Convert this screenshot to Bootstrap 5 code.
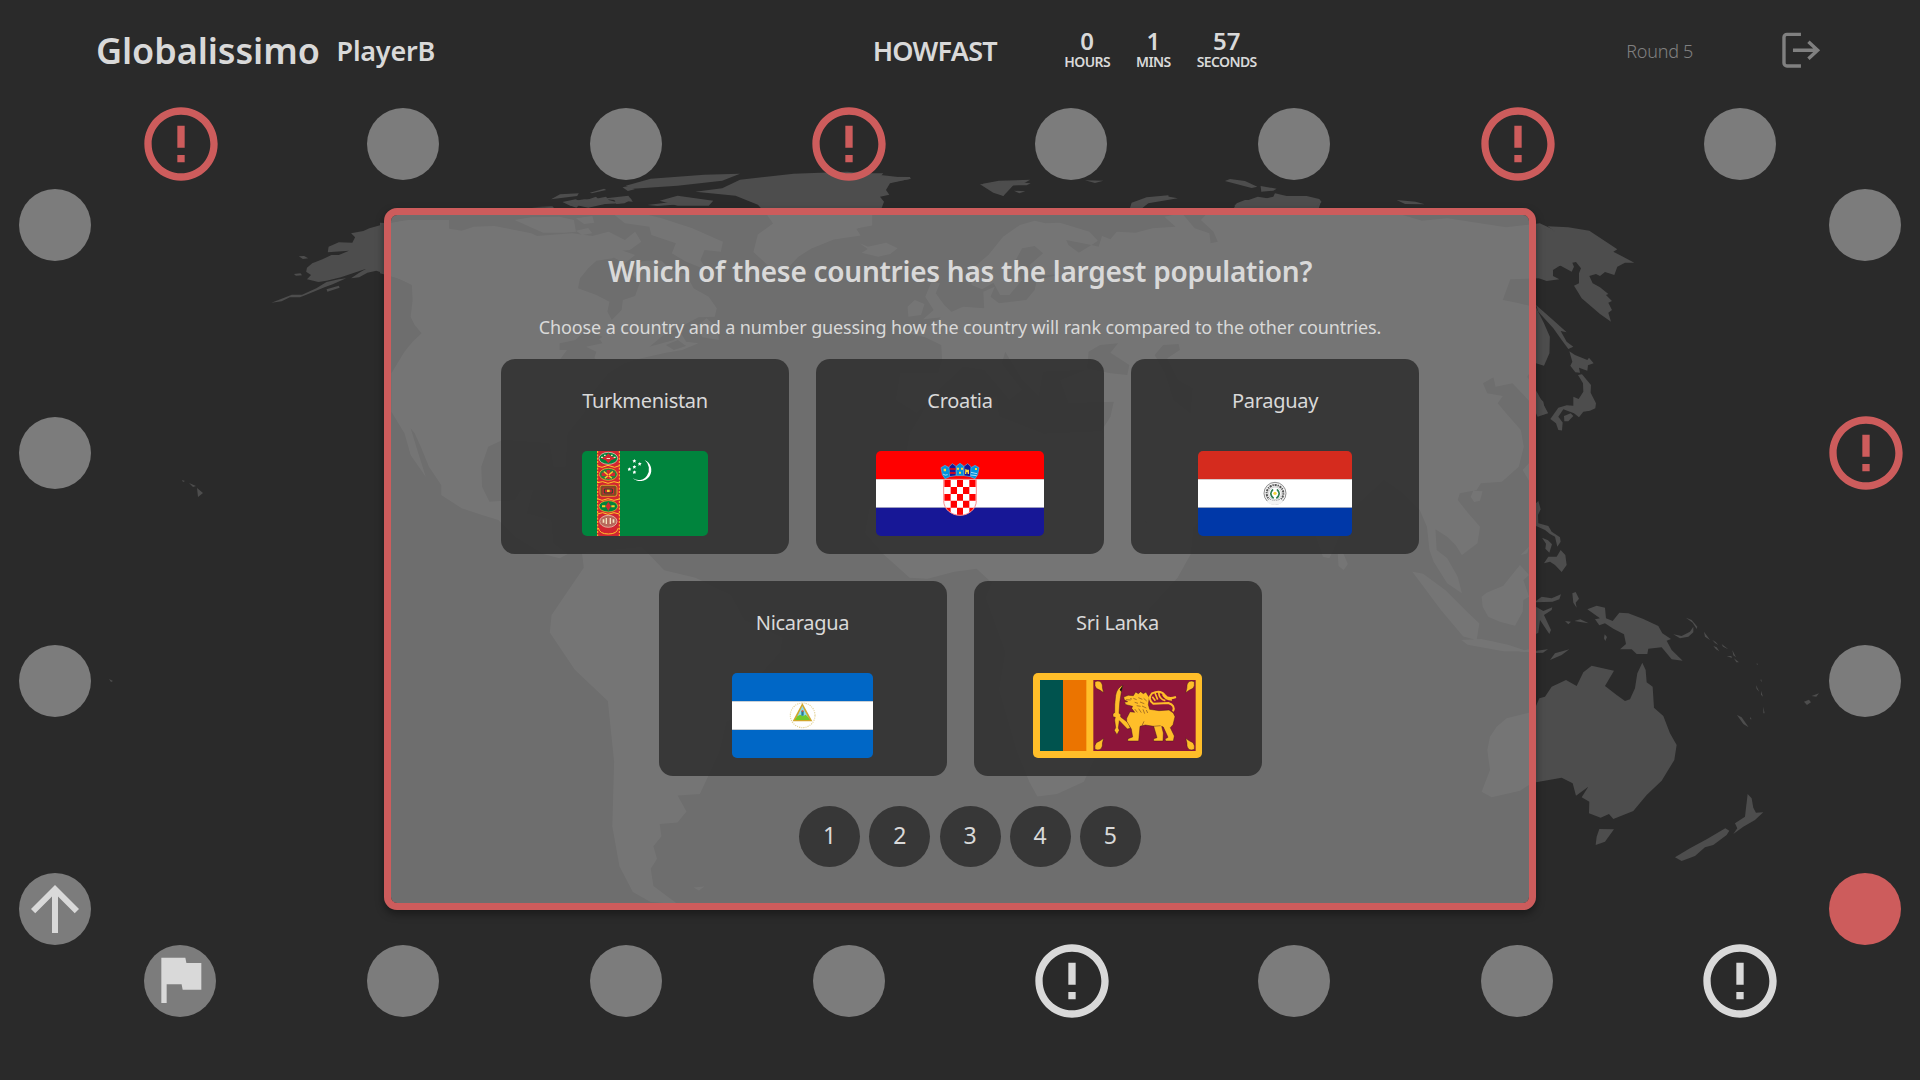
<!DOCTYPE html>
<html lang="en">
<head>
<meta charset="utf-8">
<title>Globalissimo</title>
<link href="https://cdn.jsdelivr.net/npm/bootstrap@5.3.0/dist/css/bootstrap.min.css" rel="stylesheet">
<style>
body{width:1920px;height:1080px;overflow:hidden;background:#2a2a2a;color:#d9d9d9;font-family:"Noto Sans",sans-serif}
.world{position:absolute;left:0;top:0;z-index:0;fill:#4d4d4d}
.world .sea{fill:#2a2a2a}
.screen{position:relative;z-index:1;height:1080px}
.topbar{height:108px;padding:0 96px;white-space:nowrap;font-weight:600}
.topbar>div{height:102px}
.brand-name{font-size:36px;width:241px;letter-spacing:-.1px}
.player-name,.game-name{font-size:27px}
.player-name{width:537px;letter-spacing:-.25px}
.game-name{width:192px;letter-spacing:-.75px}
.clock{width:563px;padding-bottom:6px;gap:26px}
.clock-num{font-size:24px;line-height:28px}
.clock-unit{font-size:14px;line-height:14px;letter-spacing:-.6px}
.round-no{font-size:18px;font-weight:300;color:#808080;width:148px;letter-spacing:-.27px}
.ring-row{height:72px;padding:0 68.6px}
.ring-mid{height:765px;padding:9px 19px 0}
.dot{width:72px;height:72px;border-radius:50%;background:#7c7c7c}
.dot.red{background:#cd5c5c}
.dot.open{background:none;color:#cd5c5c}
.dot.open.pale{color:#d9d9d9}
.dot svg{flex:none;fill:currentColor}
.dot.open svg{margin:0 0 1px 1px}
.flag-mark{margin-bottom:5px}
.panel{width:1152px;height:702px;margin-top:19px;border:7px solid #cd5c5c;border-radius:13px;background:rgba(127,127,127,.8);background-clip:padding-box;box-shadow:0 4px 8px rgba(0,0,0,.4);padding-top:36px}
.question{font-size:28px;line-height:40px;font-weight:600;margin-bottom:22px;letter-spacing:-.27px}
.hint{font-size:18px;line-height:28px;margin-bottom:18px;letter-spacing:-.13px}
.answers{width:1000px;gap:27px}
.answer{width:288px;height:195px;border-radius:14px;background:rgba(42,42,42,.81);font-size:20px;letter-spacing:-.3px;padding:27px 0 18px}
.answer svg{height:85px;border-radius:5px}
.ranks{gap:9.2px;margin:30px 0 0 20px}
.rank{width:61px;height:61px;border-radius:50%;background:#373737;font-size:23px;line-height:58px}
</style>
<script src="https://cdn.jsdelivr.net/npm/bootstrap@5.3.0/dist/js/bootstrap.bundle.min.js"></script>
</head>
<body>
<svg class="world" width="1920" height="1080" viewBox="0 0 1920 1080">
<!-- Alaska -->
<g transform="scale(.4082 .3333)">
<path d="M1000,660L960,668 942,672 905,685 890,693 860,700 870,712 863,728 830,727 805,740 803,757 820,755 855,752 830,765 812,765 790,778 765,790 752,803 750,815 762,825 752,838 780,846 800,842 835,832 897,806 880,818 860,835 880,832 900,818 922,812 945,822 985,840 1012,855 1100,860 1100,660ZM665,908L690,896 715,884 740,884 775,865 800,846 830,838 848,835 815,853 795,862 755,882 735,892 710,892 690,904ZM800,868L830,857 832,863 802,875ZM732,769L745,768 755,775 742,777ZM720,822L736,820 740,826 725,827ZM1350,598L1372,583 1418,580 1414,588ZM1378,606L1410,598 1425,605 1460,590 1466,598 1478,600 1475,612 1440,614 1398,618ZM1400,618l18,-2 -6,7ZM1445,578L1480,566 1485,570 1450,580ZM1525,562L1540,558 1555,568 1538,573ZM1505,600L1535,590 1548,598 1530,610 1510,612ZM1303,622l50,-3 5,6Z"/>
</g>
<!-- North America -->
<g transform="translate(380 200) scale(.4082 .3333)">
<path d="M0,68L28,70 60,62 100,66 130,78 200,92 230,80 280,78 330,90 370,100 385,108 470,100 520,108 560,95 600,120 625,95 640,125 612,150 592,152 570,175 530,182 510,205 490,235 485,265 530,285 562,305 557,335 568,360 592,330 595,300 625,288 636,250 620,225 625,190 650,182 690,182 712,210 750,222 768,265 805,290 825,325 820,350 780,352 740,378 700,400 660,440 720,420 735,395 750,425 780,430 740,450 700,458 640,475 600,490 560,520 520,580 500,640 460,700 455,800 425,800 415,730 300,720 265,740 248,800 250,860 268,905 330,900 345,870 375,870 360,940 420,960 425,1030 460,1062 440,1075 400,1062 330,1010 290,960 250,945 200,925 150,885 150,855 120,800 100,740 85,700 75,685 90,745 112,830 75,765 60,700 28,635 28,520 60,455 80,425 102,400 85,375 75,350 80,300 78,255 45,235 0,220ZM505,390L545,410 525,430 470,450 500,440 530,480 440,480 470,430Z" fill-rule="evenodd"/>
<path d="M330,60L370,52 440,50 475,60 480,95 450,98 400,98 375,85ZM480,55L520,48 525,68 500,72ZM575,45L640,40 690,55 765,85 840,125 835,155 795,150 785,180 800,210 750,185 715,160 725,130 665,105 660,80 600,70ZM480,92l30,-8 10,16 -25,5ZM560,165L590,150 625,165 600,190ZM775,380L800,355 828,385 830,420 790,412ZM450,8L500,-2 560,0 590,10 500,15ZM655,15L700,8 745,12 680,18ZM1175,130L1195,140 1215,135 1240,128 1268,145 1250,162 1220,170 1180,158 1195,147Z"/>
<path class="sea" d="M440,430L500,415 540,420 545,430 505,440 530,455 525,475 490,480 460,480 480,450 440,450ZM700,435l30,-15 20,18 -30,12Z"/>
</g>
<!-- Greenland, South America, Africa, Indonesia -->
<g transform="translate(240 140) scale(.8929 .4974)">
<path d="M510,104L540,97 560,80 620,68 680,64 725,72 752,78 720,88 715,105 718,125 708,145 708,172 690,178 695,192 665,200 640,218 625,235 615,255 605,268 590,250 575,225 580,190 597,168 590,150 580,130 555,112ZM432,92L460,78 520,70 560,68 540,82 490,92 440,98ZM370,128l40,-14 5,12 -25,10ZM405,118l30,-6 5,12ZM470,122L490,112 530,122 525,132 490,132Z"/>
<path d="M383,830L450,818 475,865 510,880 550,915 565,965 608,1000 605,1030 585,1070 578,1140 545,1170 537,1230 515,1315 490,1318 500,1350 490,1372 470,1375 472,1400 463,1420 467,1445 460,1465 463,1500 490,1536 460,1532 440,1512 425,1460 417,1380 419,1250 412,1128 375,1065 347,990 349,955 385,860ZM508,1503l12,-2 -6,8Z"/>
<path d="M720,832L700,790 705,740 745,640 750,590 770,530 848,515 850,555 900,590 965,585 985,660 1015,770 1030,790 1068,780 1065,832 1050,880 1009,961 1007,1095 970,1150 967,1208 945,1290 915,1315 893,1320 884,1290 870,1230 850,1105 857,1030 835,920 842,890 825,862 800,868 770,882 750,880ZM1020,1080l12,30 -18,90 -14,-10 2,-60Z"/>
<path d="M1313,868L1325,872 1350,905 1375,950 1388,972 1385,1005 1370,998 1345,945ZM1368,1005L1390,1003 1420,1015 1442,1028 1415,1028 1375,1015ZM832,88L850,82 885,80 875,90 860,92 855,112 840,100Z"/>
</g>
<!-- Europe and Asia -->
<g transform="translate(900 200) scale(.4209 .3333)">
<path d="M320,62L345,70 380,68 450,95 470,122 455,135 395,120 400,135 425,158 455,135 472,140 480,108 500,118 515,95 560,98 600,85 655,80 628,50 670,40 700,85 735,100 738,130 755,125 745,95 715,60 730,40 800,45 795,15 850,-10 900,0 1000,5 995,25 1100,45 1180,40 1240,62 1300,55 1370,68 1440,82 1520,70 1640,140 1520,235 1450,238 1432,300 1465,308 1511,322 1530,370 1544,410 1543,460 1530,497 1511,490 1490,530 1515,580 1540,640 1515,650 1500,610 1478,580 1455,550 1415,560 1410,532 1385,550 1395,580 1432,588 1420,610 1440,640 1475,690 1482,740 1470,800 1430,845 1380,850 1370,870 1330,880 1325,900 1350,940 1378,980 1372,1030 1335,1065 1320,1035 1300,1010 1272,988 1275,1050 1300,1075 1325,1130 1335,1180 1300,1150 1268,1085 1258,1050 1252,980 1235,930 1195,880 1150,840 1090,910 1050,990 1030,1050 1020,1075 1005,1070 985,1000 960,900 900,850 820,860 740,790 700,790 770,880 700,980 620,1030 560,920 490,730 480,690 500,650 508,605 400,610 380,540 440,510 340,515 330,590 290,540 250,455 242,490 290,570 260,600 200,510 150,500 100,560 40,640 -10,600 0,520 90,520 100,478 98,435 60,412 20,400 75,375 105,345 150,320 200,325 198,275 225,260 215,290 235,310 300,300 320,270 325,240 385,222 315,228 308,195 340,160 320,138 290,145 275,180 278,215 290,240 260,285 238,285 222,248 195,268 170,255 168,210 210,165 245,110 285,75ZM75,245L95,250 85,280 105,315 122,335 110,350 55,358 80,330 60,290ZM35,300L58,312 50,345 20,350 18,320ZM1040,1062l12,-5 12,35 -10,18 -12,-12ZM1362,872l22,2 -6,28 -14,4 -8,-16ZM1222,1118L1250,1135 1300,1180 1330,1220 1310,1220ZM548,25L570,5 640,-10 660,-5 590,10 575,25ZM1180,0L1225,5 1247,13 1200,12Z"/>
<path class="sea" d="M448,455L475,435 518,430 500,458 545,495 540,525 500,520 445,505ZM605,465L625,435 662,432 665,450 635,475 660,540 695,565 690,640 650,600 630,520Z"/>
</g>
<g transform="translate(840) scale(.3333)">
<path d="M420,553L480,548 485,543 520,545 572,550 560,556 520,556 490,588 460,578ZM522,572l34,2 -18,6ZM735,541l55,1 -25,7ZM870,624L875,608 920,592 985,586 988,597 930,603 905,625ZM1155,543L1170,537 1215,543 1252,560 1235,564ZM1262,558l48,8 -10,6 -36,3ZM1182,624L1190,610 1215,600 1260,600 1300,590 1305,580 1340,588 1400,588 1438,597 1445,606 1420,624ZM0,520L130,520 120,530 210,531 212,536 150,550 138,570 148,584 120,590 132,605 125,624 0,624ZM0,645L90,655 97,668 40,690 0,703Z"/>
</g>
<!-- Far East, Kamchatka and Japan -->
<g transform="translate(1500) scale(.3333)">
<path d="M60,685L108,685 130,685 168,696 143,679 205,682 268,692 352,748 340,755 403,788 375,788 352,800 343,825 315,816 300,828 288,822 268,828 278,850 300,862 325,882 318,885 336,903 325,908 336,930 325,938 333,965 300,942 245,895 230,870 222,857 237,850 237,820 243,805 228,786 217,788 222,800 215,815 182,797 159,800 159,828 178,838 140,843 108,832 60,830ZM108,915L125,930 165,965 200,997 182,993 200,1025 220,1040 205,1047 185,1020 160,985 115,935ZM208,1054L225,1065 262,1080 267,1073 281,1090 264,1096 262,1112 237,1103 240,1118 226,1117 211,1097 217,1085ZM234,1125L246,1123 273,1155 272,1178 288,1210 286,1225 270,1232 250,1235 237,1252 222,1240 190,1228 175,1250 188,1268 186,1292 175,1290 168,1270 151,1257 175,1223 200,1216 220,1217 220,1190 236,1197 250,1175 249,1150ZM192,1248l20,-8 8,8 -15,16 -12,0ZM108,1182L130,1205 133,1222 108,1237Z"/>
</g>
<!-- Philippines, Indonesia, Australia, New Zealand -->
<g transform="translate(1480 440) scale(.3333)">
<path d="M5,470L20,458 70,437 120,375 147,405 130,420 147,470 130,480 128,515 105,557 60,545 25,530 8,500ZM128,90L147,70 147,122ZM168,190L175,183 182,208 174,225 175,250 205,258 215,275 240,292 242,305 232,320 225,290 210,282 195,270 168,258ZM186,293l18,8 12,12 -8,25 -12,-12 2,-15ZM192,370L205,350 230,350 242,330 256,345 260,375 245,396 225,375 210,365ZM168,483L185,470 215,475 243,463 238,478 218,485 168,487ZM168,500L190,513 217,502 215,510 192,525 213,570 208,582 180,540 175,578 168,582ZM277,460l10,-4 10,20 -10,12 3,15 -10,-15ZM255,543l18,2 -8,8ZM283,543l18,-5 25,12 -20,-3ZM374,583l7,8 -5,12 -4,-8ZM168,632l36,-4 -15,10 -21,1ZM210,660L225,640 268,628 245,645ZM322,508L350,497 375,503 378,535 398,543 418,518 445,520 490,537 535,558 547,580 573,597 560,602 575,630 608,662 575,658 545,622 505,626 502,642 470,642 455,628 420,628 438,612 432,583 400,566 375,550 358,556 345,538 360,535ZM580,583L605,588 630,575 640,560 640,577 625,590 600,595ZM618,533L635,540 652,560 650,567 638,548ZM672,575L690,600 675,590ZM697,600l10,6 8,9 -10,-6ZM700,618l10,4 8,12 -10,-6ZM757,630l11,22 -8,-6ZM725,612l20,16 -16,-8ZM740,648l14,0 2,6ZM762,655l15,12 -8,0ZM828,735l10,20 -8,-8ZM843,752l6,18 -6,-6ZM831,668l3,8 -4,-3ZM843,716l3,10 -4,-4ZM771,825L785,832 806,862 790,852ZM810,830l5,8 -4,0ZM972,785l15,-6 6,8 -12,8ZM995,768l22,-8 -8,10ZM850,800l4,20 -4,0Z"/>
<path d="M147,818L80,835 50,860 30,890 22,930 30,990 5,1055 35,1072 120,1052 147,1035 168,1027 245,1013 278,1030 288,1067 325,1040 305,1072 328,1085 327,1120 362,1133 387,1122 400,1137 460,1113 500,1065 545,1022 583,960 590,915 570,880 550,828 522,803 518,740 500,727 497,690 487,668 472,700 465,745 450,778 435,783 410,765 375,738 402,692 335,677 310,697 290,738 258,720 215,740 195,770 178,775 168,798ZM358,1167L402,1168 375,1205 347,1215 350,1190ZM803,1062L815,1075 820,1103 828,1118 850,1117 825,1140 790,1160 760,1182 772,1165 765,1150 795,1130ZM736,1165L748,1172 740,1185 700,1215 675,1222 645,1248 605,1263 585,1252 630,1225 680,1198ZM0,603L40,605 97,628 30,625 0,615ZM115,635l32,-7 0,8ZM122,345l25,-25 -5,20Z"/>
</g>
<!-- Pacific islands -->
<path d="M197,488l6,5 -5,4ZM189,483l7,3 -3,1ZM182,480l3,1 -2,1ZM109,679l4,2 -2,1Z"/>
</svg>

<svg class="d-none">
<symbol id="alert" viewBox="0 0 24 24"><path d="M11 15h2v2h-2zm0-8h2v6h-2zm.99-5C6.47 2 2 6.48 2 12s4.47 10 9.99 10C17.52 22 22 17.52 22 12S17.52 2 11.99 2zM12 20c-4.42 0-8-3.58-8-8s3.58-8 8-8 8 3.58 8 8-3.58 8-8 8z"/></symbol>
</svg>

<div class="screen">
<header class="topbar">
<div class="d-flex align-items-center">
<div class="brand-name">Globalissimo</div>
<div class="player-name">PlayerB</div>
<div class="game-name">HOWFAST</div>
<div class="clock d-flex text-center">
<div><div class="clock-num">0</div><div class="clock-unit">HOURS</div></div>
<div><div class="clock-num">1</div><div class="clock-unit">MINS</div></div>
<div><div class="clock-num">57</div><div class="clock-unit">SECONDS</div></div>
</div>
<div class="round-no">Round 5</div>
<svg class="exit-icon" width="50" height="40" viewBox="0 0 50 40" fill="none" stroke="#808080" stroke-width="3.4"><path d="M27,3.300H13a3,3 0 0 0 -3,3V32a3,3 0 0 0 3,3H27M19,19.300H44M34.500,10.800L43.700,19.300 34.500,27.800"/></svg>
</div>
</header>

<div class="ring-row d-flex justify-content-around">
<div class="dot open d-flex align-items-center justify-content-center"><svg width="88" height="88"><use href="#alert"/></svg></div>
<div class="dot"></div><div class="dot"></div>
<div class="dot open d-flex align-items-center justify-content-center"><svg width="88" height="88"><use href="#alert"/></svg></div>
<div class="dot"></div><div class="dot"></div>
<div class="dot open d-flex align-items-center justify-content-center"><svg width="88" height="88"><use href="#alert"/></svg></div>
<div class="dot"></div>
</div>

<div class="ring-mid d-flex justify-content-between">
<div class="d-flex flex-column justify-content-between">
<div class="dot"></div><div class="dot"></div><div class="dot"></div>
<div class="dot d-flex align-items-center justify-content-center"><svg width="72" height="72" viewBox="0 0 24 24"><path d="M4 12l1.410 1.410L11 7.830V20h2V7.830l5.580 5.590L20 12l-8-8-8 8z"/></svg></div>
</div>

<main class="panel d-flex flex-column align-items-center">
<h1 class="question">Which of these countries has the largest population?</h1>
<p class="hint">Choose a country and a number guessing how the country will rank compared to the other countries.</p>
<div class="answers d-flex flex-wrap justify-content-center">
<div class="answer d-flex flex-column align-items-center justify-content-between"><span>Turkmenistan</span>
<svg width="126" viewBox="36 33 378 255" preserveAspectRatio="none"><path fill="#00843d" d="M36 33h378v255H36z"/><path fill="#d22630" d="M81 33h69v255H81z"/>
<g fill="none" stroke="#ffc72c" stroke-width="3"><path d="M83,33v255M148,33v255" stroke-dasharray="6 4"/><path d="M82,78l14,4 18,-6 20,6 14,-5M82,128l16,-3 16,5 18,-5 16,4M82,176l14,5 18,-5 18,5 16,-4M82,222l16,-4 16,5 18,-5 16,4M85,264q4,18 30,18t30,-18"/></g>
<g stroke="#ffc72c" stroke-width="2"><ellipse cx="115" cy="55" rx="28" ry="18" fill="#00843d" stroke="#f7dfd0"/><ellipse cx="115" cy="103" rx="27" ry="18" fill="#2b7b3c"/><rect x="90" y="136" width="51" height="33" rx="7" fill="#7d4a25"/><ellipse cx="115" cy="199" rx="28" ry="17" fill="#00843d"/><ellipse cx="115" cy="244" rx="26" ry="18" fill="#b8685b" stroke="#efdfc9"/></g>
<g fill="#d22630"><path d="M115,40l8,9 14,6 -14,6 -8,9 -8,-9 -14,-6 14,-6ZM95,98h40v10H95ZM110,90h10v27h-10ZM98,143h34v20H98ZM115,185l8,14 -8,14 -8,-14Z"/></g>
<g fill="#f6e4c0"><path d="M93,50h6v4h-6zM131,50h6v4h-6zM102,44h5v4h-5zM123,44h5v4h-5zM110,54h10v3h-10zM98,238h5v10h-5zM107,234h4v18h-4zM119,234h4v18h-4zM128,238h5v10h-5z"/></g>
<g fill="#ffc72c"><path d="M103,93l24,20 -3,3 -24,-20ZM127,93l-24,20 3,3 24,-20ZM96,196h10v6H96zM124,196h10v6h-10zM111,148h8v8h-8z"/></g><path fill="none" stroke="#17502c" stroke-width="3" d="M103,147h24v12h-24z"/>
<path fill="#fff" d="M224,60a33,33 0 1 1 -36,54a27,29 0 0 0 36,-54ZM193,57l2,4 4,0 -3,3 1,4 -4,-2 -4,2 1,-4 -3,-3 4,0ZM209,66l2,3 4,1 -3,3 0,4 -3,-2 -4,2 1,-4 -2,-3 4,-1ZM193,75l2,3 4,1 -3,3 0,4 -3,-2 -4,2 1,-4 -2,-3 4,-1ZM178,82l2,3 4,1 -3,3 0,4 -3,-2 -4,2 1,-4 -2,-3 4,-1ZM193,91l2,3 4,1 -3,3 0,4 -3,-2 -4,2 1,-4 -2,-3 4,-1Z"/></svg></div>
<div class="answer d-flex flex-column align-items-center justify-content-between"><span>Croatia</span>
<svg width="168" viewBox="48 33 504 255" preserveAspectRatio="none"><path fill="#f00" d="M48 33h504v85H48z"/><path fill="#fff" d="M48 118h504v85H48z"/><path fill="#171796" d="M48 203h504v85H48z"/>
<clipPath id="shield"><path d="M251,118H349V182C349,208 325,226 300,226S251,208 251,182Z"/></clipPath>
<g clip-path="url(#shield)"><path fill="#fff" d="M250 117h100v110H250z"/><path fill="#f00" d="M253,120h19v21h-19zM291,120h18v21h-18zM328,120h19v21h-19zM272,141h19v21h-19zM309,141h19v21h-19zM253,162h19v20h-19zM291,162h18v20h-18zM328,162h19v20h-19zM272,182h19v21h-19zM309,182h19v21h-19zM253,203h19v21h-19zM291,203h18v24h-18zM328,203h19v21h-19z"/></g>
<path fill="none" stroke="#ff8d8d" stroke-width="3" d="M251,118H349V182C349,208 325,226 300,226S251,208 251,182Z"/>
<g stroke="#4db5e8" stroke-width="2"><path fill="#0093dd" d="M243,83l12,-7 14,8 0,26 -14,6 -8,-12ZM357,83l-12,-7 -14,8 0,26 14,6 8,-12ZM289,78l11,-8 11,8v29h-22Z"/><path fill="#171796" d="M267,80l10,-9 11,8v28l-19,3ZM333,80l-10,-9 -11,8v28l19,3Z"/></g>
<path stroke="#f00" stroke-width="5" d="M269,87h18M269,99h18"/><path fill="#ffd83a" d="M291,83h6v6h-6zM303,83h6v6h-6zM297,95h6v6h-6zM251,86h7v8h-7zM316,86l5,3h6v13h-4v-5h-4v5h-4zM345,84h6v6h-6z"/><path fill="none" stroke="#fff" stroke-width="2" d="M249,102q6,6 14,2M333,97l18,4M332,105l18,2"/></svg></div>
<div class="answer d-flex flex-column align-items-center justify-content-between"><span>Paraguay</span>
<svg width="154" viewBox="1014 33 462 255" preserveAspectRatio="none"><path fill="#d52b1e" d="M1014 33h462v85H1014z"/><path fill="#fff" d="M1014 118h462v85H1014z"/><path fill="#0038a8" d="M1014 203h462v85H1014z"/>
<g fill="none"><circle cx="1245" cy="160" r="33" stroke="#777" stroke-width="2.500" fill="#f4f4f4"/><circle cx="1245" cy="160" r="25" stroke="#555" stroke-width="6" stroke-dasharray="3 2 5 2" pathLength="120"/><path d="M1224,181q21,16 42,0" stroke="#f4f4f4" stroke-width="12"/><circle cx="1245" cy="160" r="19" fill="#fff" stroke="#aaa" stroke-width="1.500"/><path d="M1239,148q-14,14 2,27M1251,148q14,14 -2,27" stroke="#2f7d4f" stroke-width="5"/></g><circle cx="1245" cy="160" r="5" fill="#f5d53a"/></svg></div>
<div class="answer d-flex flex-column align-items-center justify-content-between"><span>Nicaragua</span>
<svg width="141" viewBox="0 0 423 255" preserveAspectRatio="none"><path fill="#0067c6" d="M0 0h423v85H0zM0 170h423v85H0z"/><path fill="#fff" d="M0 85h423v85H0z"/>
<circle cx="212" cy="127" r="37" fill="none" stroke="#e3d39c" stroke-width="3.500" stroke-dasharray="4 3 3 3"/><path fill="#d1a72c" d="M211,90L241,145H182Z"/><path fill="#8fd9ec" d="M211,99L231,138H192Z"/><path fill="#73c92b" d="M196,130l9,-5 8,5 8,-5 7,7 6,9h-45Z"/><path fill="#287e8f" d="M208,114h7v14h-7z"/><path fill="#eb4a30" d="M209,112h5v4h-5z"/></svg></div>
<div class="answer d-flex flex-column align-items-center justify-content-between"><span>Sri Lanka</span>
<svg width="169" viewBox="39 39 507 255" preserveAspectRatio="none"><path fill="#ffbe29" d="M39 39h507v255H39z"/><path fill="#00534e" d="M60 60h69v213H60z"/><path fill="#eb7400" d="M129 60h70v213h-70z"/><path fill="#8d153a" d="M220 60h307v213H220z"/>
<g fill="#ffbe29" stroke="#3b1020" stroke-width="1.300" stroke-linejoin="round"><path d="M225,65Q243,59 247,75Q246,84 251,98Q241,90 229,85Q223,78 225,65ZM523,65Q505,59 501,75Q502,84 497,98Q507,90 519,85Q525,78 523,65ZM225,268Q243,274 247,258Q246,249 251,235Q241,243 229,248Q223,255 225,268ZM523,268Q505,274 501,258Q502,249 497,235Q507,243 519,248Q525,255 523,268Z"/>
<path d="M309,75Q291,83 287,106Q283,135 284,158L279,161V170L286,172 284,180 287,203 283,211 291,224 298,211 295,204 298,182 322,207 331,205 327,190 302,171V163L297,160Q298,126 304,96Z"/>
<path d="M311,111L325,106 340,107 347,96 355,101 362,95 370,101 378,96 383,105 388,112 385,134 389,148 417,152 447,150 460,159 465,170 459,194 451,203 463,228 460,243H437L435,237 444,232 430,201 425,199 430,219 429,243H401V236L411,233 401,199 376,195 360,199 356,243H323L324,236 338,231 334,207 320,184 320,175 330,155 344,157 335,145 338,139 318,134 313,127 323,125 313,119Z"/></g>
<path fill="none" stroke="#ffbe29" stroke-width="6" d="M459,154Q467,136 445,129L400,131Q381,116 396,100Q422,89 434,105Q443,120 468,111"/><path fill="none" stroke="#ffbe29" stroke-width="5" d="M405,99l8,20M416,96q1,22 20,26M428,103q8,16 28,17M397,110l9,12"/>
<path fill="none" stroke="#3b1020" stroke-width="1.300" d="M340,115l10,4M355,113l12,5M371,115l9,8M344,127l10,3M360,126l13,5M350,137l12,2M366,138l13,6M344,147l8,10M356,146l8,12M369,148l5,13M379,150l4,9M330,116l6,1M372,184l-6,13M400,199l22,-2M318,119l14,1"/><path fill="#17110d" d="M309,75l-10,14 5,7Z"/></svg></div>
</div>
<div class="ranks d-flex text-center">
<div class="rank">1</div><div class="rank">2</div><div class="rank">3</div><div class="rank">4</div><div class="rank">5</div>
</div>
</main>

<div class="d-flex flex-column justify-content-between">
<div class="dot"></div>
<div class="dot open d-flex align-items-center justify-content-center"><svg width="88" height="88"><use href="#alert"/></svg></div>
<div class="dot"></div><div class="dot red"></div>
</div>
</div>

<div class="ring-row d-flex justify-content-around">
<div class="dot d-flex align-items-center justify-content-center"><svg class="flag-mark" width="64" height="64" viewBox="0 0 24 24"><path d="M14.400 6L14 4H5v17h2v-7h5.600l.4 2h7V6z"/></svg></div>
<div class="dot"></div><div class="dot"></div><div class="dot"></div>
<div class="dot open pale d-flex align-items-center justify-content-center"><svg width="88" height="88"><use href="#alert"/></svg></div>
<div class="dot"></div><div class="dot"></div>
<div class="dot open pale d-flex align-items-center justify-content-center"><svg width="88" height="88"><use href="#alert"/></svg></div>
</div>
</div>
</body>
</html>
